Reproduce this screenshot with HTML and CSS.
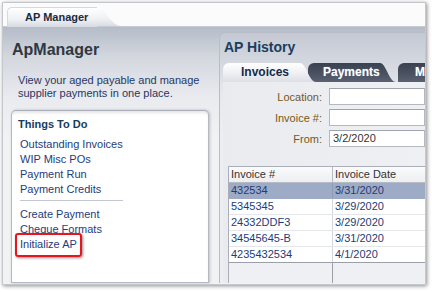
FILE: index.html
```html
<!DOCTYPE html>
<html>
<head>
<meta charset="utf-8">
<link rel="stylesheet" href="styles.css">
</head>
<body>
<div class="window">
  <div class="tabstrip">
    <div class="apptab">AP Manager</div>
  </div>
  <div class="main">
    <div class="leftcol">
      <h1 class="title">ApManager</h1>
      <p class="desc">View your aged payable and manage<br>supplier payments in one place.</p>
      <div class="todo">
        <div class="todo-head">Things To Do</div>
        <ul class="links">
          <li><a>Outstanding Invoices</a></li>
          <li><a>WIP Misc POs</a></li>
          <li><a>Payment Run</a></li>
          <li><a>Payment Credits</a></li>
        </ul>
        <div class="sep"></div>
        <ul class="links links2">
          <li><a>Create Payment</a></li>
          <li><a>Cheque Formats</a></li>
          <li><a class="marked">Initialize AP</a></li>
        </ul>
      </div>
    </div>
    <div class="history">
      <h2 class="htitle">AP History</h2>
      <div class="tabs">
        <div class="tab active">Invoices</div>
        <div class="tab dark">Payments</div>
        <div class="tab dark last">Mi</div>
      </div>
      <div class="pane">
        <div class="form">
          <div class="frow"><label class="flabel">Location:</label><div class="finput"></div></div>
          <div class="frow"><label class="flabel">Invoice #:</label><div class="finput"></div></div>
          <div class="frow"><label class="flabel">From:</label><div class="finput">3/2/2020</div></div>
        </div>
        <div class="table">
          <div class="trow thead"><div class="c1">Invoice #</div><div class="c2">Invoice Date</div></div>
          <div class="trow sel"><div class="c1">432534</div><div class="c2">3/31/2020</div></div>
          <div class="trow"><div class="c1">5345345</div><div class="c2">3/29/2020</div></div>
          <div class="trow"><div class="c1">24332DDF3</div><div class="c2">3/29/2020</div></div>
          <div class="trow"><div class="c1">34545645-B</div><div class="c2">3/31/2020</div></div>
          <div class="trow lastrow"><div class="c1">4235432534</div><div class="c2">4/1/2020</div></div>
          <div class="tfill"><div class="c1"></div><div class="c2"></div></div>
        </div>
      </div>
    </div>
  </div>
</div>
</body>
</html>
```

FILE: styles.css
```css
* { box-sizing: border-box; }
html, body { margin: 0; padding: 0; background: #ffffff; }
body {
  width: 432px; height: 292px; overflow: hidden;
  font-family: "Liberation Sans", Arial, sans-serif;
  font-size: 11px;
}
.window {
  margin: 2px 0 0 2px;
  width: 424px; height: 283px;
  border: 1px solid #c4c7cc;
  box-shadow: 1px 1px 4px rgba(0,0,0,0.45);
  display: flex; flex-direction: column;
  overflow: hidden;
  background: #f3f4f6;
}
.tabstrip {
  height: 24px;
  flex: none;
  background: #fbfbfc;
  border-bottom: 1px solid #c5cad3;
  padding: 4px 0 0 4px;
  display: flex;
}
.apptab {
  position: relative;
  width: 90px; height: 20px;
  padding-left: 17px;
  line-height: 19px;
  font-weight: bold;
  color: #1c2a3e;
  border: 1px solid #d6d9de; border-right: 0; border-bottom: 0;
  border-top-left-radius: 5px;
  background: linear-gradient(#ffffff, #eef0f3 60%, #d6dae1);
}
.apptab::after {
  content: "";
  position: absolute; top: -1px; left: 100%;
  width: 24px; height: 20px;
  background: linear-gradient(#ffffff, #eef0f3 60%, #d6dae1);
  clip-path: path("M0 0 C8 0 14 19 24 19 L0 19 Z");
}
.main {
  flex: 1;
  display: flex;
  background: linear-gradient(#b5bcc8 0px, #d3d7de 30px, #e9ebef 70px, #f1f2f4 110px);
}
.leftcol {
  width: 216px; flex: none;
  display: flex; flex-direction: column;
  padding-bottom: 1px;
}
.title {
  margin: 13px 0 0 9px;
  font-size: 16px; line-height: 20px;
  font-weight: bold;
  color: #2f3742;
}
.desc {
  margin: 14px 0 0 15px;
  line-height: 13px;
  color: #1f3866;
}
.todo {
  flex: 1;
  margin: 10px 0 0 8px;
  width: 198px;
  background: #ffffff;
  border: 1px solid #b4b9c2;
  border-top-color: #a9aeb8;
  border-radius: 5px 5px 0 0;
  box-shadow: inset 0 3px 3px -1px rgba(0,0,0,0.10), 1px 0 3px rgba(0,0,0,0.22);
  padding: 6px 0 0 6px;
}
.todo-head {
  font-weight: bold;
  line-height: 14px;
  color: #173c5e;
}
.links { list-style: none; margin: 6px 0 0 0; padding: 0 0 0 2px; }
.links li { line-height: 15px; }
.links a { color: #1d3d7c; }
.links2 { margin-top: 6px; }
.sep {
  margin: 3px 0 0 2px;
  width: 103px; height: 1px;
  background: #c3c7cf;
}
.marked { position: relative; display: inline-block; }
.marked::after {
  content: "";
  position: absolute;
  left: -5px; top: -4px; right: -5px; bottom: -5px;
  border: 2px solid #e8161c;
  border-radius: 3px;
  box-shadow: 1px 1px 3px rgba(0,0,0,0.45);
}
.history {
  flex: 1;
  margin-top: 5px;
  margin-bottom: 1px;
  border: 1px solid #b8bdc6; border-right: 0; border-bottom: 0;
  border-top-left-radius: 6px;
  background: linear-gradient(#c4c9d3 0px, #d4d8df 30px, #e6e8ec 60px, #eceef1 100px);
  display: flex; flex-direction: column;
  padding-left: 3px;
  min-width: 0;
}
.htitle {
  margin: 5px 0 0 1px;
  font-size: 14px; line-height: 18px;
  font-weight: bold;
  color: #1b3d60;
}
.tabs {
  margin-top: 7px;
  height: 19px; flex: none;
  display: flex;
}
.tab {
  flex: none;
  position: relative;
  height: 19px; line-height: 19px;
  font-size: 12px; font-weight: bold;
  border-top-left-radius: 6px;
  white-space: nowrap;
}
.tab::after {
  content: "";
  position: absolute; top: 0; left: 100%;
  width: 16px; height: 19px;
  clip-path: path("M0 0 C6 0 9 19 16 19 L0 19 Z");
}
.active {
  z-index: 2;
  width: 77px; padding-left: 18px;
  color: #142b48;
  background: linear-gradient(#ffffff, #f0f1f4 50%, #dcdfe5);
}
.active::after { background: linear-gradient(#ffffff, #f0f1f4 50%, #dcdfe5); }
.dark {
  z-index: 1;
  color: #ffffff;
  background: linear-gradient(#3a4150, #4b5363 60%, #5a6272);
  text-shadow: 0 0 1px #7f93b8;
}
.dark::after { background: linear-gradient(#3a4150, #4b5363 60%, #5a6272); }
.tab.dark { margin-left: 8px; width: 72px; padding-left: 15px; }
.tab.last { margin-left: 18px; width: 40px; padding-left: 17px; }
.pane {
  flex: 1;
  display: flex; flex-direction: column;
  background: linear-gradient(90deg, #e9ebef, #eef0f3);
  min-width: 0;
}
.form { padding-top: 6px; display: flex; flex-direction: column; gap: 4px; }
.frow { display: flex; align-items: center; height: 17px; }
.flabel {
  width: 99px; flex: none; text-align: right;
  color: #765819;
  margin-right: 7px;
}
.finput {
  flex: 1;
  height: 17px;
  background: #ffffff;
  border: 1px solid #b3b8c1;
  border-top-color: #9ea4ae;
  padding-left: 3px;
  line-height: 15px;
  color: #333333;
}
.table {
  flex: 1;
  margin: 19px 0 0 5px;
  border: 1px solid #a9aeb8; border-right: 0; border-bottom: 0;
  display: flex; flex-direction: column;
}
.trow {
  display: flex;
  height: 16px; line-height: 15px;
  background: #ffffff;
  border-bottom: 1px solid #e4e6ea;
  color: #1e3c78;
}
.trow .c1 { width: 104px; flex: none; padding-left: 2px; border-right: 1px solid #d4d7dd; }
.trow .c2 { flex: 1; padding-left: 2px; }
.thead {
  background: linear-gradient(#fbfbfc, #eceef1);
  color: #333333;
  border-bottom: 1px solid #b5bac3;
}
.thead .c1 { border-right-color: #b5bac3; }
.sel { background: #9eabc6; border-bottom-color: #9eabc6; }
.sel .c1 { border-right-color: #8f9cb8; }
.lastrow { border-bottom-color: #9a9fa8; }
.tfill {
  flex: 1;
  display: flex;
  background: #eef0f3;
}
.tfill .c1 { width: 104px; flex: none; border-right: 1px solid #9a9fa8; }
```
